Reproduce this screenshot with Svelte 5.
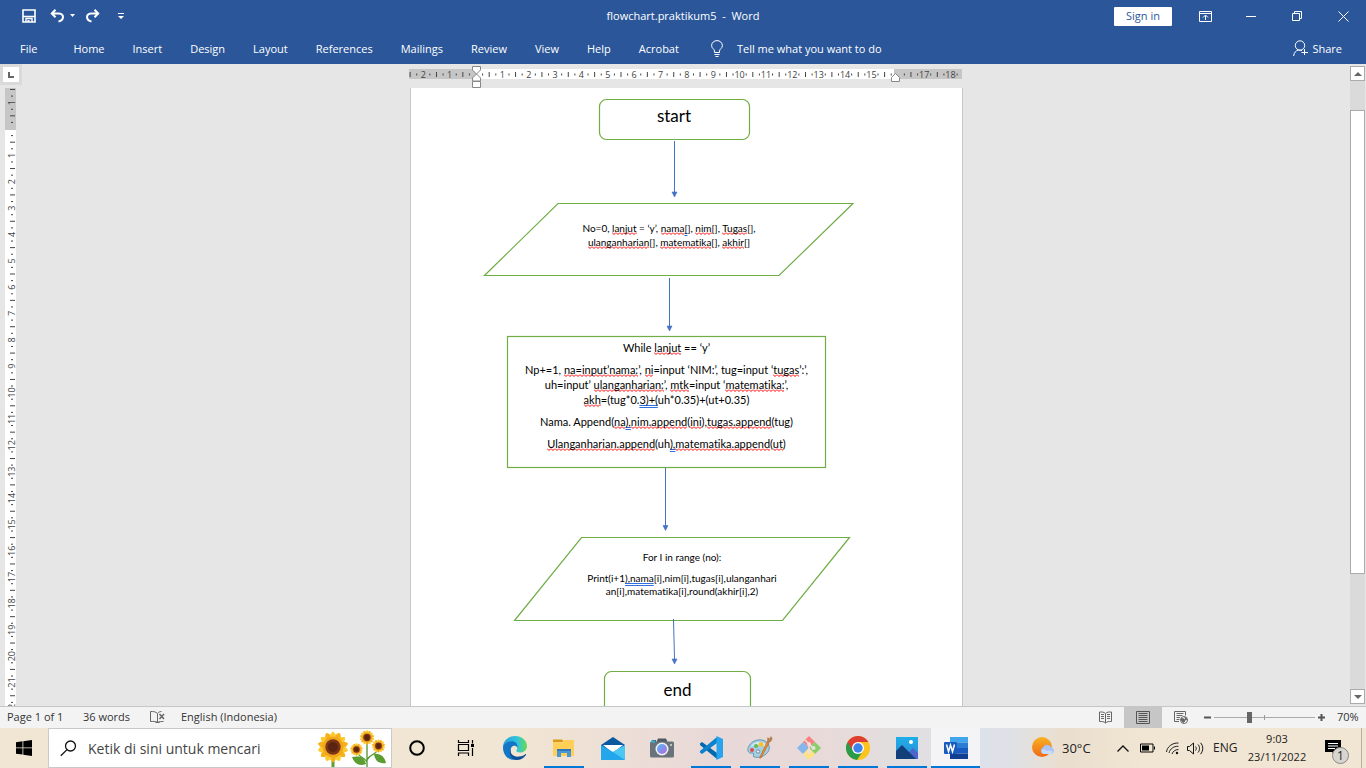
<script>
  const tabs = ['File', 'Home', 'Insert', 'Design', 'Layout', 'References', 'Mailings', 'Review', 'View', 'Help', 'Acrobat'];

  const CM = 26.36;
  const range = (from, to) => Array.from({ length: to - from + 1 }, (_, i) => from + i);

  // Labels, half-centimetre bars and quarter dots along one ruler
  function marks(from, to, skip) {
    return range(from, to).map((n) => ({
      at: n * CM,
      label: n === 0 || skip.includes(n) ? '' : String(Math.abs(n))
    }));
  }
  const hMarks = marks(-3, 18, [-3, 16]);
  const vMarks = marks(-2, 22, [-2]);

  let zoom = $state(34);
  let query = $state('');

  // Each paragraph is a list of lines; each line is a list of [text, mark]
  const input = [
    [
      [['No=0, '], ['lanjut', 's'], [' = ‘y’, '], ['nama', 's'], ['[', 'g'], ['], '], ['nim', 's'], ['[], '], ['Tugas', 's'], ['[],']],
      [['ulanganharian', 's'], ['[], '], ['matematika', 's'], ['[], '], ['akhir', 's'], ['[]']]
    ]
  ];
  const loop = [
    [[['While '], ['lanjut', 's'], [' == ‘y’']]],
    [
      [['Np+=1, '], ['na=input’nama:', 's'], ['’, '], ['ni', 's'], ['=input ‘NIM:’, tug=input ‘'], ['tugas', 's'], ['’:’,']],
      [['uh=input’ '], ['ulanganharian:', 's'], ['’, '], ['mtk', 's'], ['=input ‘'], ['matematika:', 's'], ['’,']],
      [['akh', 's'], ['=(tug*0.'], ['3)+(', 'g'], ['uh*0.35)+(ut+0.35)']]
    ],
    [[['Nama. Append('], ['na', 's'], ['),', 'g'], ['nim.append', 's'], ['('], ['ini', 's'], ['),'], ['tugas.append', 's'], ['(tug)']]],
    [[['Ulanganharian.append', 's'], ['(uh'], ['),', 'g'], ['matematika.append', 's'], ['('], ['ut', 's'], [')']]]
  ];
  const output = [
    [[['For I in range (no):']]],
    [
      [['Print(i+1'], ['),nama', 'g'], ['[i],nim[i],tugas[i],ulanganhari']],
      [['an[i],matematika[i],round(akhir[i],2)']]
    ]
  ];
</script>

{#snippet body(paragraphs)}
  {#each paragraphs as lines}
    <p>
      {#each lines as line}
        <span class="line">{#each line as [text, mark]}<span class:spell={mark === 's'} class:grammar={mark === 'g'}>{text}</span>{/each}</span>
      {/each}
    </p>
  {/each}
{/snippet}

<div class="window">
  <header class="titlebar">
    <div class="quick">
      <button aria-label="Save">
        <svg width="14" height="14" viewBox="0 0 14 14"><path d="M1 1h12v12H1z" fill="none" stroke="#fff" stroke-width="1.6" /><path d="M1 7.5h12M4 13V9.5h6V13" fill="none" stroke="#fff" stroke-width="1.4" /><path d="M5.5 11h2v2h-2z" fill="#fff" /></svg>
      </button>
      <button aria-label="Undo" class="undo">
        <svg width="26" height="14" viewBox="0 0 26 14"><path d="M5.500 .8 1.800 4.500l3.700 3.700M2.500 4.500H9q4 .5 4 3.700-.3 3.600-4.500 4.300" fill="none" stroke="#fff" stroke-width="2" /><path d="M20 5h5l-2.500 3z" fill="#fff" /></svg>
      </button>
      <button aria-label="Redo">
        <svg width="15" height="14" viewBox="0 0 15 14"><path d="m9.500 .8 3.700 3.700-3.700 3.700M12.500 4.500H6q-4 .5-4 3.700.3 3.600 4.500 4.300" fill="none" stroke="#fff" stroke-width="2" /></svg>
      </button>
      <button aria-label="Customize Quick Access Toolbar" class="customize">
        <svg width="6" height="7" viewBox="0 0 6 7"><path d="M0 0h6v1H0zM0 3h6L3 6z" fill="#fff" /></svg>
      </button>
    </div>
    <h1>flowchart.praktikum5&nbsp; -&nbsp; Word</h1>
    <div class="controls">
      <button class="signin">Sign in</button>
      <button class="ctl" aria-label="Ribbon Display Options">
        <svg width="13" height="11" viewBox="0 0 13 11" fill="none" stroke="#fff"><path d="M.5.5h12v10H.5zM.5 2.500h12M6.500 9V4.500M4 6.500l2.500-2.500L9 6.500" /></svg>
      </button>
      <button class="ctl" aria-label="Minimize"><svg width="10" height="10" viewBox="0 0 10 10"><path d="M0 5.500h10" stroke="#fff" /></svg></button>
      <button class="ctl" aria-label="Restore"><svg width="10" height="10" viewBox="0 0 10 10" fill="none" stroke="#fff"><path d="M.5 2.500h7v7h-7zM2.500 2.500v-2h7v7h-2" /></svg></button>
      <button class="ctl" aria-label="Close"><svg width="11" height="11" viewBox="0 0 11 11"><path d="m.5.5 10 10m0-10-10 10" stroke="#fff" /></svg></button>
    </div>
  </header>

  <nav class="tabs">
    {#each tabs as tab}
      <button>{tab}</button>
    {/each}
    <button class="tell">
      <svg width="12" height="17" viewBox="0 0 12 17" fill="none" stroke="#fff"><path d="M3.500 12.500V11C3.500 9 .6 8.500.6 5.600a5.400 5 0 0 1 10.800 0C11.400 8.500 8.500 9 8.500 11v1.500zM3.500 14.500h5M4.500 16.500h3" /></svg>
      Tell me what you want to do
    </button>
    <button class="share">
      <svg width="15" height="17" viewBox="0 0 15 17" fill="none" stroke="#fff"><circle cx="7" cy="5.500" r="4.700" /><path d="M.6 16C1 12.500 3 10.500 5.500 10c1.500 0 2.500.3 3.500.8M11.500 9v6M8.500 12.500h6.500" /></svg>
      Share
    </button>
  </nav>

  <main>
    <div class="left">
      <button class="tabstop" aria-label="Tab selector"><svg width="6" height="6" viewBox="0 0 6 6"><path d="M1 0v5h5" fill="none" stroke="#666" stroke-width="2" /></svg></button>
      <svg class="vruler" width="15" viewBox="-2 0 15 618" preserveAspectRatio="xMinYMin slice" aria-hidden="true">
        <rect width="11" height="618" fill="#fff" /><rect width="11" height="42" fill="#c6c6c6" />
        {#each vMarks as { at, label }}
          <g transform="translate(0 {41 + at})">
            {#if label}<text transform="rotate(-90)" x="0" y="10">{label}</text>{/if}
            <path d="M6 6.600h2M5 13.200h5M6 19.800h2" stroke="#444" />
          </g>
        {/each}
      </svg>
    </div>

    <div class="desk">
      <svg class="hruler" width="554" height="22" viewBox="0 0 554 22" aria-hidden="true">
        <rect y="3" width="553" height="10" fill="#c6c6c6" /><rect x="67" y="3" width="418" height="10" fill="#fff" />
        {#each hMarks as { at, label }}
          <g transform="translate({67 + at} 0)">
            {#if label}<text x="0" y="12">{label}</text>{/if}
            <path d="M6.600 7.500v2M13.200 6v5M19.800 7.500v2" stroke="#444" />
          </g>
        {/each}
        <g fill="#fff" stroke="#888"><path d="M63.500.5h8V4l-4 4-4-4zM67.500 8l4 4v3h-8v-3zM63.500 15.500h8v6h-8z" /><path d="m486.500 7.500 4 4v4h-8v-4z" /></g>
      </svg>

      <article class="page">
        <svg class="shapes" width="552" height="618" viewBox="410 88 552 618" fill="none" aria-hidden="true">
          <g stroke="#70ad47" stroke-width="1.200">
            <rect x="599.500" y="99.500" width="150" height="40" rx="7" />
            <path d="M558 203.500h295l-74 72H484.500z" />
            <rect x="507.500" y="336.500" width="318" height="131" />
            <path d="M581.500 537.500h268l-67 83h-268z" />
            <rect x="604.500" y="671.500" width="146" height="42" rx="7" />
          </g>
          <path d="M674.500 141v52M669.500 278v48M665.500 468v58M673.500 619l1 40" stroke="#4472c4" />
          <path d="M672 192h5l-2.500 5zM667 326h5l-2.500 5zM663 525.500h5l-2.500 5zM672 659h5l-2.500 5z" fill="#4472c4" stroke="#4472c4" stroke-width=".6" />
        </svg>
        <div class="node start">start</div>
        <div class="node input">{@render body(input)}</div>
        <div class="node loop">{@render body(loop)}</div>
        <div class="node output">{@render body(output)}</div>
        <div class="node end">end</div>
      </article>
    </div>

    <div class="scroll">
      <button aria-label="Scroll up"><svg width="8" height="4" viewBox="0 0 8 4"><path d="M0 4h8L4 0z" fill="#666" /></svg></button>
      <div class="track"><div class="thumb"></div></div>
      <button aria-label="Scroll down"><svg width="8" height="4" viewBox="0 0 8 4"><path d="M0 0h8L4 4z" fill="#666" /></svg></button>
    </div>
  </main>

  <footer class="status">
    <span class="pages">Page 1 of 1</span>
    <span class="words">36 words</span>
    <svg class="proof" width="15" height="13" viewBox="0 0 15 13" fill="none" stroke="#666"><path d="M7.500 11.500C5.500 10 3 10.500.5 10.500V.5c3 0 5 0 7 2zm0-9c1-1.500 2.500-2 4-2M7.500 11.500c1.500-1 4-1 6-1M5.500 11.500h4" /><path d="m9.500 3 4.500 5m0-5-4.500 5" stroke-width="1.500" /></svg>
    <span>English (Indonesia)</span>
    <div class="views">
      <button aria-label="Read Mode"><svg width="13" height="13" viewBox="0 0 13 13" fill="none" stroke="#666"><path d="M6.500 12V2.500C5 .8 3 1 .5 1v9.500c2.500 0 4.500 0 6 1.500 1.500-1.500 3.500-1.500 6-1.500V1c-2.500 0-4.500-.2-6 1.500M2 3.500h3M2 5.500h3M2 7.500h3M8 3.500h3M8 5.500h3M8 7.500h3" /></svg></button>
      <button aria-label="Print Layout" class="on"><svg width="14" height="13" viewBox="0 0 14 13" fill="none" stroke="#555"><path d="M.5.5h13v12H.5zM2.500 2.500h9M2.500 4.500h9M2.500 6.500h9M2.500 8.500h9M2.500 10.500h9" /></svg></button>
      <button aria-label="Web Layout"><svg width="14" height="13" viewBox="0 0 14 13" fill="none" stroke="#666"><path d="M5 10.500H.5V.5h11v4M2.500 2.500h7M2.500 4.500h6M2.500 6.500h3.500M2.500 8.500h3" /><circle cx="10" cy="9" r="3.500" fill="#fff" /><path d="M7.500 7.500 10 8l1 2-2 1.500-1.500-2zM11 6l2 2.500-1.500.5z" fill="#666" /></svg></button>
    </div>
    <div class="zoom">
      <button aria-label="Zoom out"><svg width="7" height="7" viewBox="0 0 7 7"><path d="M0 3.500h7" stroke="#555" stroke-width="2" /></svg></button>
      <input type="range" min="0" max="100" bind:value={zoom} aria-label="Zoom" />
      <button aria-label="Zoom in"><svg width="7" height="7" viewBox="0 0 7 7"><path d="M0 3.500h7M3.500 0v7" stroke="#555" stroke-width="2" /></svg></button>
    </div>
    <span class="percent">70%</span>
  </footer>

  <div class="taskbar">
    <button class="win" aria-label="Start"><svg width="16" height="16" viewBox="0 0 16 16"><path d="M0 2.200 6.500 1.300v6.200H0zM7.300 1.200 16 0v7.500H7.300zM0 8.300h6.500v6.300L0 13.700zM7.300 8.300H16V16l-8.700-1.200z" /></svg></button>
    <label class="search">
      <svg width="17" height="17" viewBox="0 0 17 17" fill="none" stroke="#111" stroke-width="1.300"><circle cx="10.500" cy="6" r="5" /><path d="M7 9.600.8 15.800" /></svg>
      <input type="text" placeholder="Ketik di sini untuk mencari" bind:value={query} aria-label="Ketik di sini untuk mencari" />
      <svg class="flowers" width="70" height="38" viewBox="0 0 70 38">
        <defs>
          <g id="bloom">
            {#each range(0, 13) as i}
              <path d="M0-8C4-10 3.500-13 0-15.500-3.500-13-4-10 0-8z" fill={i % 2 ? '#f7b21a' : '#fccb2c'} transform="rotate({i * 25.7})" />
            {/each}
            <circle r="10.500" fill="#f3a51c" /><circle r="7.700" fill="#7a3517" /><circle r="5" fill="#5a2411" />
          </g>
        </defs>
        <path d="M16 28v10" stroke="#5f9f31" stroke-width="3" /><use href="#bloom" x="16" y="18" />
        <path d="M50 12v26M40 22c1 7 7 5 10 11M62 18c-1 8-9 6-12 13" fill="none" stroke="#4f962d" stroke-width="1.300" />
        <path d="M49 35c-2-8-8-8-14-7 3 8 8 9 14 7zM57 25c6-1 11 3 12 9-7 1-11-2-12-9z" fill="#5b9d31" />
        <use href="#bloom" transform="translate(50 8.500) scale(.48)" /><use href="#bloom" transform="translate(39.500 20.500) scale(.42)" /><use href="#bloom" transform="translate(61.500 17) scale(.44)" />
      </svg>
    </label>
    <div class="apps">
      <button aria-label="Cortana"><svg width="18" height="18" viewBox="0 0 18 18"><circle cx="9" cy="9" r="6.800" fill="none" stroke="#000" stroke-width="2" /></svg></button>
      <button aria-label="Task View"><svg width="18" height="16" viewBox="0 0 18 16" fill="none" stroke="#000" stroke-width="1.200"><path d="M1.500 0v2.500h10V0M1.500 4.500h10v6h-10zM1.500 16v-3h10v3M15.500 0v3.500M15.500 8v8" /><path d="M14 4h3v3h-3z" fill="#000" stroke="none" /></svg></button>
      <button aria-label="Edge">
        <svg width="24" height="24" viewBox="0 0 24 24"><defs><linearGradient id="eg"><stop stop-color="#249ee0" /><stop offset=".6" stop-color="#32c5dc" /><stop offset="1" stop-color="#68da4e" /></linearGradient></defs><path d="M0 11.500C0 4.500 5.500 0 12 0c7 0 12 4.500 12 10 0 4-3 6.500-7 6.500-3 0-4-1-3.500-2.200 1.500-2 .5-6.300-3.500-6.300-4 0-8 1.500-10 4z" fill="url(#eg)" /><path d="M0 11.500C1 7 5.500 5.300 9 5.300c3.500 0 6 2.700 5.500 6.200C12 8 7.500 10 7.500 14.500c0 5 4 8 8 8.500C8 26 0 21 0 11.500z" fill="#1476c6" /><path d="M8 12c-2 5 2 9.500 8 8.500 3 0 5-1 6.500-2.500.5 0 .8.500.5 1-2.500 4-8 6-12 4.500-4-2-5.500-7.500-3-11.500z" fill="#0e4f9a" /></svg>
      </button>
      <button aria-label="File Explorer" class="run">
        <svg width="22" height="20" viewBox="0 0 22 20"><path d="M0 1.500h9l2 2.500H0z" fill="#d99a13" /><path d="M0 18V4l9 .5L11 2h10v16z" fill="#ffcf57" /><path d="M4 11h14v8h-4v-4H8v4H4z" fill="#4796d6" /><path d="M4 11h14v2H4z" fill="#2d79bd" /></svg>
      </button>
      <button aria-label="Mail">
        <svg width="24" height="23" viewBox="0 0 24 23"><path d="M0 8 12 0l12 8v8H0z" fill="#0958a0" /><path d="M2 8h20L12 16z" fill="#fff" /><path d="M0 8v15h24V8L12 15z" fill="#23a6ec" /><path d="M24 8v15L12 15z" fill="#4bc7f4" /></svg>
      </button>
      <button aria-label="Camera">
        <svg width="24" height="20" viewBox="0 0 24 20"><defs><linearGradient id="lens" x2="1" y2="1"><stop stop-color="#4cbdf5" /><stop offset="1" stop-color="#bb65e0" /></linearGradient></defs><path d="M8 .5h8L18 5H6zM2 2h4v2H2z" fill="#515a61" /><rect y="3.500" width="24" height="16" rx="1.500" fill="#69737a" /><path d="M1 2.500h4v2H1z" fill="#2bb5ed" /><circle cx="12" cy="11" r="6.500" fill="#f3f3f5" /><circle cx="12" cy="11" r="5" fill="url(#lens)" /><circle cx="21" cy="7" r="1" fill="#ddd" /></svg>
      </button>
      <button aria-label="Visual Studio Code" class="run">
        <svg width="24" height="24" viewBox="0 0 24 24"><path d="m1 7.500 2-1.500L18 17v6L1 9z" fill="#0069ad" /><path d="m1 16.500 2 1.500L18 7V1L1 15z" fill="#0a82cc" /><path d="M17.500 0 24 3v18l-6.500 3z" fill="#28a4ef" /></svg>
      </button>
      <button aria-label="Paint" class="run">
        <svg width="26" height="24" viewBox="0 0 26 24"><path d="M2 10C5 4 13 2.500 18 5s6 9 1 13c-3 3-8 4-12 3-2-1 1-3-1-4-6 1-6-4-4-7z" fill="#a5cfe4" stroke="#6698b4" /><path d="M3.500 11c3-5 9-6 13-4.500 3 1.500 4 4 3.500 6-2-4-10-5-16.500-1.500z" fill="#d2e9f3" /><circle cx="5" cy="14" r="2" fill="#de4c4c" /><circle cx="9" cy="10" r="2" fill="#62bb52" /><circle cx="14" cy="8.500" r="2.400" fill="#fac12c" /><circle cx="11" cy="15.500" r="1.700" fill="#f2f5f8" stroke="#668cab" /><path d="M12.500 22 20 6l2 1-8 15z" fill="#e88c31" stroke="#ba611e" stroke-width=".6" /><path d="m20 6 .5-5 2 1.500L24 0l1.500 2.500-1 2.500L22 7z" fill="#b68250" /></svg>
      </button>
      <button aria-label="Git" class="run">
        <svg width="24" height="24" viewBox="0 0 24 24"><path d="m12 0 6 6-6 6-6-6z" fill="#f98080" /><path d="m6 6 6 6-6 6-6-6z" fill="#87b5ec" /><path d="m18 6 6 6-6 6-6-6z" fill="#87d069" /><path d="m12 12 6 6-6 6-6-6z" fill="#ffe180" /><path d="m8 4 4 4v8M12 8l4 4" stroke="#ece0dc" stroke-width="1.600" fill="none" /><circle cx="12" cy="8" r="2" fill="#ece0dc" /><circle cx="12" cy="16" r="2" fill="#ece0dc" /><circle cx="16.500" cy="12" r="2" fill="#ece0dc" /></svg>
      </button>
      <button aria-label="Chrome" class="run">
        <svg width="24" height="24" viewBox="0 0 24 24"><circle cx="12" cy="12" r="12" fill="#fcc31d" /><path d="M1.600 6A12 12 0 0 0 11 24l6-9-5-3z" fill="#2a9a4b" /><path d="M1.600 6A12 12 0 0 1 22.400 6H12l-5 9z" fill="#df3e32" /><circle cx="12" cy="12" r="6" fill="#fff" /><circle cx="12" cy="12" r="4.700" fill="#3e83ee" /></svg>
      </button>
      <button aria-label="Photos" class="run">
        <svg width="22" height="22" viewBox="0 0 22 22"><defs><linearGradient id="ph" x2="0" y2="1"><stop stop-color="#1dafe9" /><stop offset="1" stop-color="#3188d6" /></linearGradient></defs><rect width="22" height="22" fill="url(#ph)" /><path d="m11 17 6-6 5 5v6H11z" fill="#4d65cb" /><path d="m0 14 6-6 14 14H0z" fill="#123e7a" /><circle cx="15" cy="5" r="2" fill="#fff" /></svg>
      </button>
      <button aria-label="Word" class="run active">
        <svg width="24" height="22" viewBox="0 0 24 22"><path d="M6 0h18v5.500H6z" fill="#41a5ee" /><path d="M6 5.500h18V11H6z" fill="#2b7cd3" /><path d="M6 11h18v5.500H6z" fill="#185abd" /><path d="M6 16.500h18V22H6z" fill="#103f91" /><rect y="5" width="13" height="12" rx="1" fill="#185abd" /><path d="m2.500 7.500 2 7L6.500 8l2 6.500 2-7" fill="none" stroke="#fff" stroke-width="1.500" /></svg>
      </button>
    </div>
    <div class="tray">
      <button class="weather">
        <svg width="23" height="22" viewBox="0 0 23 22"><defs><linearGradient id="sun" x2="0" y2="1"><stop stop-color="#f8b224" /><stop offset="1" stop-color="#f06a15" /></linearGradient></defs><circle cx="10" cy="10" r="10" fill="url(#sun)" /><path d="M11 17a3.500 3.500 0 0 1 0-6.500 4.500 4.500 0 0 1 8-.5c4 1 4 6 .5 7z" fill="#a9c4f5" /><path d="M10 13c2-1 4 0 5 1 2-1 5 0 6 1-1 2-2 2-4 2h-5c-2-1-3-2-2-4z" fill="#c9dbfb" /></svg>
        30°C
      </button>
      <button class="chev" aria-label="Show hidden icons"><svg width="12" height="7" viewBox="0 0 12 7"><path d="M.5 6.500 6 1l5.500 5.500" fill="none" stroke="#111" stroke-width="1.300" /></svg></button>
      <svg class="battery" width="15" height="10" viewBox="0 0 15 10"><path d="M.5 1h12.500v8H.5zM14.500 3.500v3" fill="none" stroke="#000" /><path d="M2 2.500h7v5H2z" /></svg>
      <svg class="wifi" width="13" height="13" viewBox="0 0 13 13" fill="none" stroke="#222"><path d="M.5 10C1 5 6 .7 12.500 1M3 11c1-4 4.500-7 9.500-6.700M6 12c1-2.500 3-4.500 6.500-4.500" /><circle cx="11" cy="11" r="1.200" fill="#111" stroke="none" /></svg>
      <svg class="volume" width="17" height="13" viewBox="0 0 17 13" fill="none" stroke="#111"><path d="M.5 4.500h2l4-3.500v11l-4-3.500h-2zM8.500 4.500c1 1 1 3 0 4M11 2.500c2 2 2 6 0 8M13.500.8c3 3 3 8 0 11.400" /></svg>
      <span class="lang">ENG</span>
      <time>9:03<br />23/11/2022</time>
      <button class="notes" aria-label="Notifications">
        <svg width="16" height="16" viewBox="0 0 16 16"><path d="M0 0h16v12h-5v4l-4-4H0z" /><path d="M3 3.500h10M3 6h10M3 8.500h7" stroke="#fff" /></svg>
        <span class="count">1</span>
      </button>
    </div>
  </div>
</div>

<style>
  :global(body) { margin: 0; }
  .window { display: flex; flex-direction: column; height: 100vh; overflow: hidden; background: #e6e6e6; color: #333; font: 11px/16px "Open Sans", "Noto Sans", sans-serif; }
  button { display: flex; align-items: center; justify-content: center; padding: 0; border: 0; background: none; color: inherit; font: inherit; }
  svg { flex: none; display: block; }
  p { margin: 0; }

  .titlebar { display: grid; grid-template-columns: 1fr auto 1fr; align-items: center; height: 32px; background: #2b579a; color: #fff; }
  .quick { display: flex; align-items: center; padding-left: 22px; }
  .undo { margin: 0 9px 0 14px; }
  .customize { margin-left: 18px; }
  h1 { margin: 0; font-size: 11px; font-weight: 400; }
  .controls { display: flex; align-items: center; justify-content: flex-end; height: 32px; }
  .signin { width: 58px; height: 19px; margin-right: 10px; border-radius: 1px; background: #fff; color: #2b579a; }
  .ctl { width: 46px; height: 32px; }

  .tabs { display: flex; align-items: center; height: 32px; padding: 1px 0 0 6px; box-sizing: border-box; background: #2b579a; color: #fff; }
  .tabs button { padding: 0 14px; white-space: nowrap; }
  .tabs button:first-child { margin-right: 8px; }
  .tabs .tell { gap: 14px; padding-left: 18px; }
  .tabs .share { gap: 4px; margin-left: auto; padding-right: 24px; }

  main { flex: 1; display: flex; min-height: 0; overflow: hidden; border-bottom: 1px solid #c6c6c6; }
  .left { width: 22px; display: flex; flex-direction: column; gap: 3px; }
  .tabstop { width: 22px; height: 21px; flex: none; border: 3px solid #dadada; background: #fff; }
  .vruler { flex: 1; min-height: 0; margin-left: 3px; }
  .vruler text, .hruler text { font: 9px "Open Sans", sans-serif; fill: #444; text-anchor: middle; }

  .desk { flex: 1; display: flex; flex-direction: column; align-items: center; padding-top: 2px; }
  .page { position: relative; flex: 1; width: 552px; min-height: 0; background: #fff; box-shadow: inset 1px 0 #c6c6c6, 1px 0 #c6c6c6; color: #000; font: 10px/15px Lato, sans-serif; font-variant-ligatures: none; overflow: hidden; }
  .shapes { position: absolute; inset: 0; }
  .node { position: absolute; display: flex; flex-direction: column; align-items: center; text-align: center; white-space: nowrap; }
  .line { display: block; }
  .start, .end { font-size: 17px; line-height: 20px; }
  .start { left: 189px; top: 18px; width: 150px; }
  .input { left: 111px; top: 133px; width: 296px; line-height: 14px; }
  .loop { left: 97px; top: 252px; width: 319px; gap: 7px; font-size: 11px; }
  .output { left: 138px; top: 463px; width: 268px; gap: 8px; line-height: 13px; }
  .end { left: 194px; top: 592px; width: 147px; }
  .spell { padding-bottom: 1px; background: url("data:image/svg+xml,%3Csvg xmlns='http://www.w3.org/2000/svg' width='4' height='3'%3E%3Cpath d='M0 .5 2 2.500 4 .5' fill='none' stroke='red' stroke-width='1'/%3E%3C/svg%3E") left bottom repeat-x; }
  .grammar { text-decoration: underline double #2f6fe0 1px; text-decoration-skip-ink: none; text-underline-offset: 1px; }

  .scroll { display: flex; flex-direction: column; width: 16px; padding: 2px 0; }
  .scroll button { width: 15px; height: 15px; flex: none; box-sizing: border-box; border: 1px solid #ababab; background: #fff; }
  .track { flex: 1; width: 15px; background: #dadada; }
  .thumb { height: 76%; margin-top: 29px; width: 13px; border: 1px solid #ababab; background: #fff; }

  .status { display: flex; align-items: center; height: 21px; flex: none; background: #f3f3f3; }
  .status > span { padding-bottom: 1px; }
  .status .pages { width: 76px; padding-left: 7px; }
  .words { width: 67px; }
  .proof { margin-right: 16px; }
  .views { display: flex; height: 21px; margin-left: auto; }
  .views button { width: 38px; }
  .views .on { background: #c6c6c6; }
  .zoom { display: flex; align-items: center; gap: 3px; margin-left: 4px; }
  .zoom input { appearance: none; width: 101px; height: 11px; margin: 0; background: linear-gradient(#999, #999) 50px 3px / 1px 5px no-repeat, linear-gradient(#aaa, #aaa) 0 5px / 100% 1px no-repeat; }
  .zoom input::-webkit-slider-thumb { appearance: none; width: 5px; height: 11px; background: #666; }
  .percent { width: 29px; margin-left: 12px; }

  .taskbar { display: flex; flex: none; height: 40px; background: linear-gradient(90deg, #f1e5d3 0, #f1e5d3 38%, #e8d9d8 52%, #e8dad8 60%, #e2dedf 66%, #dde1e9 72%, #dfe1e6 74%, #eadfce 78%, #f1e5d3 84%, #f1e5d3); color: #222; }
  .win { width: 48px; flex: none; }
  .search { display: flex; align-items: center; width: 344px; flex: none; box-sizing: border-box; padding-left: 11px; gap: 11px; border: 1px solid #c9c9c9; background: #fff; }
  .search input { flex: 1; min-width: 0; padding: 0; border: 0; outline: 0; background: none; font: 14px "Open Sans", sans-serif; }
  .search input::placeholder { color: #444; opacity: 1; }
  .flowers { align-self: stretch; margin-right: 4px; }
  .apps { display: flex; }
  .apps button { position: relative; width: 49px; height: 40px; }
  .run::after { content: ""; position: absolute; left: 5px; right: 4px; bottom: 0; height: 2px; background: #0078d7; }
  .apps .active { background: #f4f4f6; }
  .active::after { left: 0; right: 0; }
  .tray { display: flex; align-items: center; margin: 0 4px 0 auto; border-right: 1px solid #b9b0a4; }
  .weather { gap: 7px; width: 60px; justify-content: flex-start; font-size: 13px; margin-right: 25px; }
  .battery { margin: 0 11px; }
  .volume { margin: 0 9px 0 8px; }
  .lang { width: 25px; font-size: 12px; }
  time { width: 78px; text-align: center; line-height: 18px; }
  .notes { position: relative; width: 24px; height: 40px; justify-content: flex-start; margin: 0 12px 0 9px; }
  .count { position: absolute; left: 7px; top: 19px; width: 15px; height: 15px; border: 1px solid #888; border-radius: 50%; background: #d8d5d0; font-size: 12px; line-height: 15px; }
</style>
